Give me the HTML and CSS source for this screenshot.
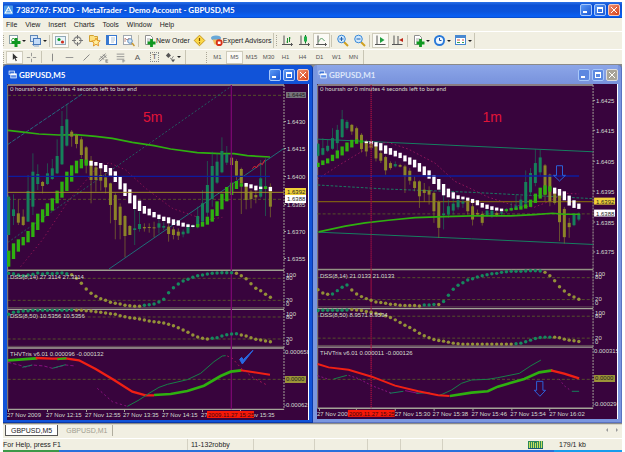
FILE: index.html
```html
<!DOCTYPE html>
<html lang="en">
<head>
<meta charset="utf-8">
<title>7382767: FXDD - MetaTrader - Demo Account - GBPUSD,M5</title>
<link rel="stylesheet" href="styles.css">
</head>
<body>
<svg class="defs" aria-hidden="true">
  <defs>
    <symbol id="i-plus" viewBox="0 0 13 13"><rect x="1.500" y="1.500" width="8" height="8" fill="#fff" stroke="#8aa0a8"/><path d="M3 7l2-3 2 2" stroke="#58a058" fill="none"/><path d="M8 4v9M3.500 8.500h9" stroke="#109820" stroke-width="3"/></symbol>
    <symbol id="i-profiles" viewBox="0 0 13 13"><rect x="1.500" y="1.500" width="7" height="6" fill="#d8e8fa" stroke="#6088b8"/><rect x="4.500" y="4.500" width="7" height="6" fill="#c4dcf8" stroke="#4878b8"/><path d="M3 10l2 2h5" fill="none" stroke="#88a8d0"/></symbol>
    <symbol id="i-market" viewBox="0 0 13 13"><rect x="1.500" y="2.500" width="10" height="8" fill="#e8f4fa" stroke="#90a8b8"/><circle cx="5" cy="5.500" r="1.600" fill="#10a030"/><circle cx="8.500" cy="8" r="1.600" fill="#d03020"/></symbol>
    <symbol id="i-target" viewBox="0 0 13 13"><circle cx="6.500" cy="6.500" r="3.500" fill="none" stroke="#888" stroke-width="1.300"/><path d="M6.500 1v4M6.500 8v4M1 6.500h4M8 6.500h4" stroke="#777"/></symbol>
    <symbol id="i-star" viewBox="0 0 13 13"><path d="M1.500 1.500h4l1 1h3v5h-8z" fill="#fce080" stroke="#d0a030"/><path d="M8 4l1.200 2.500 3 .3-2.200 2 .6 3-2.600-1.500L5.400 12l.6-3-2.200-2 3-.3z" fill="#fff0a0" stroke="#e09018" stroke-width=".9"/></symbol>
    <symbol id="i-nav" viewBox="0 0 13 13"><rect x="1.500" y="1.500" width="10" height="9" fill="#fff" stroke="#3878d0"/><path d="M3 2v8" stroke="#3878d0" stroke-width="2"/><path d="M6 4h4M6 6h4M6 8h3" stroke="#b0c4d8"/></symbol>
    <symbol id="i-data" viewBox="0 0 13 13"><rect x="1.500" y="1.500" width="8" height="9" fill="#fff" stroke="#a0a8b0"/><path d="M3 8V4l2 2 2-2v4" fill="none" stroke="#c09088"/><circle cx="8" cy="7" r="2.300" fill="#d4e8fa" stroke="#6090c0"/><path d="M10 9l2.500 3" stroke="#c89830" stroke-width="1.500"/></symbol>
    <symbol id="i-order" viewBox="0 0 13 13"><path d="M2.500 1.500h5l2 2v7h-7z" fill="#fff" stroke="#909090"/><path d="M4 5h4M4 7h3" stroke="#aaa"/><path d="M8.500 5v8M4.500 9h8" stroke="#109820" stroke-width="2.800"/></symbol>
    <symbol id="i-diamond" viewBox="0 0 13 13"><path d="M6.500 1.200l5.300 5.300-5.300 5.300-5.300-5.300z" fill="#fcd848" stroke="#c89818"/><path d="M6.500 4v3M6.500 8.200v1.200" stroke="#805000" stroke-width="1.200"/></symbol>
    <symbol id="i-expert" viewBox="0 0 13 13"><ellipse cx="6" cy="4" rx="5" ry="2.500" fill="#68a8d8"/><path d="M2.500 5.500h7l-1 5h-4z" fill="#f0c060"/><circle cx="9.200" cy="8.700" r="3.400" fill="#d83018"/><rect x="7.800" y="7.500" width="2.800" height="2.500" fill="#fff"/></symbol>
    <symbol id="i-bars" viewBox="0 0 13 13"><path d="M3 1.500v9.500M1 10.500h10.500M10 9l1.500 1.500L10 12" stroke="#555" fill="none"/><path d="M6.500 4v5M8.500 3v5M5.500 8h1M8.500 4h1" stroke="#209030"/></symbol>
    <symbol id="i-candles" viewBox="0 0 13 13"><path d="M3 1.500v9.500M1 10.500h10.500M10 9l1.500 1.500L10 12" stroke="#555" fill="none"/><path d="M7.500 1v8.500" stroke="#107828"/><rect x="6" y="2.500" width="3" height="5" fill="#20b048"/></symbol>
    <symbol id="i-line" viewBox="0 0 13 13"><path d="M3 1.500v9.500M1 10.500h10.500M10 9l1.500 1.500L10 12" stroke="#555" fill="none"/><path d="M3.500 8c2-5 4-4 6-1" stroke="#58a068" fill="none"/></symbol>
    <symbol id="i-zoomin" viewBox="0 0 13 13"><path d="M8 8l4 4" stroke="#d0a020" stroke-width="2"/><circle cx="5.500" cy="5" r="3.800" fill="#d0e8fc" stroke="#3888d8"/><path d="M3.500 5h4M5.500 3v4" stroke="#2060b0"/></symbol>
    <symbol id="i-zoomout" viewBox="0 0 13 13"><path d="M8 8l4 4" stroke="#d0a020" stroke-width="2"/><circle cx="5.500" cy="5" r="3.800" fill="#d0e8fc" stroke="#3888d8"/><path d="M3.500 5h4" stroke="#2060b0"/></symbol>
    <symbol id="i-scroll" viewBox="0 0 13 13"><path d="M3 1.500v9.500M1 10.500h10.500" stroke="#555"/><path d="M6 3l4.500 3L6 9z" fill="#20a040"/></symbol>
    <symbol id="i-shift" viewBox="0 0 13 13"><path d="M3 1.500v9.500M1 10.500h10.500M7 2v8" stroke="#555"/><path d="M12 4v4L8 6z" fill="#c02818"/></symbol>
    <symbol id="i-clock" viewBox="0 0 13 13"><circle cx="6.500" cy="6.500" r="5.500" fill="#2878d8"/><circle cx="6.500" cy="6.500" r="3.600" fill="#f0f8ff"/><path d="M6.500 4v2.500h2" stroke="#2050a0" fill="none"/></symbol>
    <symbol id="i-template" viewBox="0 0 13 13"><rect x="1.500" y="1.500" width="10" height="9" fill="#fff" stroke="#4888d0"/><path d="M1 3h11" stroke="#4888d0" stroke-width="2"/><path d="M3 6h3M8 6h2" stroke="#d05040"/><path d="M3 8.500h3M8 8.500h2" stroke="#38a050"/></symbol>
    <symbol id="i-cursor" viewBox="0 0 13 13"><path d="M4.500 1.500v8l2-2 1.500 3.500 1.300-.6-1.500-3.300h2.600z" fill="#333"/></symbol>
    <symbol id="i-cross" viewBox="0 0 13 13"><path d="M6.500 1v4M6.500 8v4M1 6.500h4M8 6.500h4" stroke="#888"/></symbol>
    <symbol id="i-vline" viewBox="0 0 13 13"><path d="M6.500 2v9" stroke="#777"/></symbol>
    <symbol id="i-hline" viewBox="0 0 13 13"><path d="M2 6.500h9" stroke="#888"/></symbol>
    <symbol id="i-trend" viewBox="0 0 13 13"><path d="M3 10l7-7" stroke="#777"/></symbol>
    <symbol id="i-channel" viewBox="0 0 13 13"><path d="M1 9l8-7M2 11l8-7M3 5l4 4M6 3l4 4M9 9.500h3M9 12h3M9.500 9v3" stroke="#777" fill="none"/></symbol>
    <symbol id="i-fibo" viewBox="0 0 13 13"><path d="M2 2.500h9M2 5.500h9M2 8.500h9M9.500 9v3.500M9 10.500h3" stroke="#888"/></symbol>
    <symbol id="i-arrows" viewBox="0 0 13 13"><path d="M1 4l3-3 3 3-3 3z" fill="#555"/><path d="M6 7l1.500 1.500L10 5" stroke="#777" fill="none"/><path d="M7 9h5l-2.500 3z" fill="#555"/></symbol>
    <symbol id="i-child" viewBox="0 0 13 13"><rect x="1.500" y="1.500" width="8" height="5" fill="#3d74d8" stroke="#fff"/><rect x="4" y="5.500" width="8" height="6" fill="#5e8ee8" stroke="#fff"/><path d="M4 6.500h8" stroke="#fff" stroke-width="2"/></symbol>
  </defs>
</svg>
<div class="app">
  <header class="titlebar">
    <svg class="logo" viewBox="0 0 12 12" aria-hidden="true"><rect width="12" height="12" rx="1" fill="#4c9be8"/><path d="M6 2l4.500 8h-9z" fill="none" stroke="#fff" stroke-width="1.400"/><path d="M4 7h4" stroke="#fff"/></svg>
    <h1>7382767: FXDD - MetaTrader - Demo Account - GBPUSD,M5</h1>
    <div class="controls"><button class="min" aria-label="Minimize"></button><button class="max" aria-label="Maximize"></button><button class="close" aria-label="Close"></button></div>
  </header>
  <nav class="menu">
    <button>File</button><button>View</button><button>Insert</button><button>Charts</button><button>Tools</button><button>Window</button><button>Help</button>
  </nav>
  <div class="toolbar">
    <div class="band">
      <i class="grip"></i>
      <button class="tool drop" aria-label="New chart"><svg><use href="#i-plus"/></svg></button>
      <button class="tool drop" aria-label="Profiles"><svg><use href="#i-profiles"/></svg></button>
      <i class="sep"></i>
      <button class="tool on" aria-label="Market watch"><svg><use href="#i-market"/></svg></button>
      <button class="tool" aria-label="Crosshair window"><svg><use href="#i-target"/></svg></button>
      <button class="tool" aria-label="Favorites"><svg><use href="#i-star"/></svg></button>
      <button class="tool" aria-label="Navigator"><svg><use href="#i-nav"/></svg></button>
      <button class="tool" aria-label="Data window"><svg><use href="#i-data"/></svg></button>
      <i class="sep"></i>
      <button class="tool wide"><svg><use href="#i-order"/></svg>New Order</button>
      <button class="tool" aria-label="Alerts"><svg><use href="#i-diamond"/></svg></button>
      <button class="tool wide"><svg><use href="#i-expert"/></svg>Expert Advisors</button>
    </div>
    <div class="band">
      <i class="grip"></i>
      <button class="tool" aria-label="Bar chart"><svg><use href="#i-bars"/></svg></button>
      <button class="tool" aria-label="Candlesticks"><svg><use href="#i-candles"/></svg></button>
      <button class="tool on" aria-label="Line chart"><svg><use href="#i-line"/></svg></button>
      <i class="sep"></i>
      <button class="tool" aria-label="Zoom in"><svg><use href="#i-zoomin"/></svg></button>
      <button class="tool" aria-label="Zoom out"><svg><use href="#i-zoomout"/></svg></button>
      <i class="sep"></i>
      <button class="tool on" aria-label="Auto scroll"><svg><use href="#i-scroll"/></svg></button>
      <button class="tool" aria-label="Chart shift"><svg><use href="#i-shift"/></svg></button>
      <i class="sep"></i>
      <button class="tool drop" aria-label="Indicators"><svg><use href="#i-order"/></svg></button>
      <button class="tool drop" aria-label="Periods"><svg><use href="#i-clock"/></svg></button>
      <button class="tool drop" aria-label="Templates"><svg><use href="#i-template"/></svg></button>
    </div>
  </div>
  <div class="toolbar small">
    <div class="band lines">
      <i class="grip"></i>
      <button class="tool on" aria-label="Cursor"><svg><use href="#i-cursor"/></svg></button>
      <button class="tool" aria-label="Crosshair"><svg><use href="#i-cross"/></svg></button>
      <i class="sep"></i>
      <button class="tool" aria-label="Vertical line"><svg><use href="#i-vline"/></svg></button>
      <button class="tool" aria-label="Horizontal line"><svg><use href="#i-hline"/></svg></button>
      <button class="tool" aria-label="Trendline"><svg><use href="#i-trend"/></svg></button>
      <button class="tool" aria-label="Channel"><svg><use href="#i-channel"/></svg></button>
      <button class="tool" aria-label="Fibonacci"><svg><use href="#i-fibo"/></svg></button>
      <button class="tool glyph">A</button>
      <button class="tool glyph"><span>T</span></button>
      <button class="tool drop" aria-label="Arrows"><svg><use href="#i-arrows"/></svg></button>
    </div>
    <div class="band periods">
      <i class="grip"></i>
      <button class="tool">M1</button><button class="tool on">M5</button><button class="tool">M15</button><button class="tool">M30</button><button class="tool">H1</button><button class="tool">H4</button><button class="tool">D1</button><button class="tool">W1</button><button class="tool">MN</button>
    </div>
  </div>
  <main class="desk">
    <section class="win">
      <header><svg class="child" aria-hidden="true"><use href="#i-child"/></svg><h2>GBPUSD,M5</h2>
        <div class="controls"><button class="min" aria-label="Minimize"></button><button class="max" aria-label="Maximize"></button><button class="close" aria-label="Close"></button></div></header>
      <svg class="chart" id="m5" viewBox="8 84 301 336" role="img" aria-label="GBPUSD M5 chart"></svg>
    </section>
    <section class="win idle">
      <header><svg class="child" aria-hidden="true"><use href="#i-child"/></svg><h2>GBPUSD,M1</h2>
        <div class="controls"><button class="min" aria-label="Minimize"></button><button class="max" aria-label="Maximize"></button><button class="close" aria-label="Close"></button></div></header>
      <svg class="chart" id="m1" viewBox="317 84 301 336" role="img" aria-label="GBPUSD M1 chart"></svg>
    </section>
  </main>
  <div class="tabs"><button class="active">GBPUSD,M5</button><button>GBPUSD,M1</button><span class="arrows"><i></i><i></i></span></div>
  <footer class="status">
    <span class="help">For Help, press F1</span><span class="user">11-132robby</span><span></span><span></span><span></span><span></span><span></span>
    <span class="net"><svg viewBox="0 0 15 8" aria-hidden="true"><rect width="15" height="8" fill="#2c8858"/><path d="M1.500 1v6M3.500 1v6M5.500 1v6M7.500 2v5M9.500 1v6M11.500 0v7M13.500 0v7" stroke="#c8e060"/><path d="M0 7.500h15" stroke="#185878"/></svg>179/1 kb</span>
  </footer>
  <div class="taskbar"></div>
</div>
<script src="charts.js"></script>
</body>
</html>
```
FILE: styles.css
```css
* { box-sizing: border-box; }
body { margin: 0; background: #fff; font-family: "Liberation Sans", Arial, sans-serif; font-size: 7px; color: #222; }
button { font: inherit; color: inherit; margin: 0; padding: 0; border: 0; background: none; }
h1, h2 { margin: 0; color: #fff; font-family: Lato, sans-serif; font-weight: 700; white-space: nowrap; }
.defs { position: absolute; width: 0; height: 0; }
.app { display: flex; flex-direction: column; padding: 2px 3px 0; min-height: 100vh; background: #fff; }

.titlebar { display: flex; align-items: center; height: 16px; padding: 0 2px 0 1px; background: linear-gradient(#2b72e8, #0c50d4 20%, #0c54dc 60%, #0a60f4 90%, #0a48c0); }
.logo { width: 9px; height: 10px; margin-right: 3px; }
h1 { font-size: 8px; line-height: 12px; }
.controls { display: flex; gap: 2px; margin-left: auto; }
.controls button { position: relative; width: 12px; height: 12px; border: 1px solid #a8c8fa; border-radius: 2px; background: linear-gradient(135deg, #5a98f4, #1c58d4); }
.controls .close { background: linear-gradient(135deg, #f09070, #d84018); border-color: #f8c8b8; }
.controls button::after { content: ""; position: absolute; box-sizing: border-box; }
.controls .min::after { left: 2px; bottom: 2px; width: 4px; height: 2px; background: #fff; }
.controls .max::after { inset: 2px; border: 1px solid #fff; border-top-width: 2px; }
.controls .close::after { inset: 2px; background: linear-gradient(45deg, transparent 42%, #fff 42% 58%, transparent 58%), linear-gradient(-45deg, transparent 42%, #fff 42% 58%, transparent 58%); }

.menu { display: flex; gap: 8px; height: 13px; align-items: center; padding: 0 3px; background: #f1efe2; }
.toolbar { display: flex; gap: 2px; height: 18px; padding: 1px 0; background: #f1efe2; border-top: 1px solid #fff; }
.small { height: 15px; padding: 0; }
.band { display: flex; align-items: center; padding-right: 1px; border-right: 1px solid #c8c5b4; }
.grip { width: 2px; height: 11px; margin-right: 1px; border-left: 1px dotted #aaa696; }
.sep { width: 1px; height: 12px; margin: 0 2px 0 1px; background: #c8c5b4; }
.tool { position: relative; display: flex; align-items: center; justify-content: center; flex: none; width: 17px; height: 15px; }
.small .tool { height: 13px; }
.tool svg { width: 13px; height: 13px; flex: none; }
.small .tool svg { width: 11px; height: 11px; }
.on { background: #fbfaf5; border: 1px solid #cfccbc; }
.drop { width: 21px; justify-content: flex-start; padding-left: 2px; }
.drop::after { content: ""; border: 2px solid transparent; border-top-color: #222; border-bottom: 0; margin-left: 1px; }
.wide { width: auto; padding: 0 1px 0 2px; }
.glyph { font-size: 8px; color: #555; }
.glyph span { border: 1px dotted #888; line-height: 8px; padding: 0 1px; }
.periods { margin-left: 18px; font-size: 6px; color: #555; }

.desk { display: grid; grid-template-columns: 310fr 309fr; background: #8a8a88; padding: 1px 0; }
.win { background: #1153d8; padding: 0 3px 2px 4px; border-radius: 4px 4px 0 0; border: 1px solid #0a38a8; border-width: 0 1px 1px 0; }
.win header { display: flex; align-items: center; height: 19px; padding-left: 1px; }
.win h2 { font-size: 8px; line-height: 12px; }
.child { width: 9px; height: 9px; margin-right: 2px; }
.win .controls { margin-right: 0; }
.idle { background: #7a96df; border-color: #5a72c0; }
.idle header { background: linear-gradient(#8ca6e8, #7892dc); }
.idle h2 { color: #dde6fa; }
.idle .close { background: #a8a498; border-color: #ddd; }
.idle .max, .idle .min { background: #5c88e0; }
.chart { display: block; width: 100%; height: auto; background: #38043d; border: 0 solid #b8b8ac; border-right: 1px solid #fff; }
.chart text { font-family: "Liberation Sans", Arial, sans-serif; font-size: 6px; fill: #d4dccf; }
.chart .head { font-family: Lato, sans-serif; }
.chart .note { font-size: 14px; fill: #e01438; }
.chart .dark { fill: #222; }
.chart .stamp { fill: #400810; }

.tabs { display: flex; align-items: flex-start; gap: 3px; height: 14px; padding: 0 4px 2px 2px; background: #f1efe2; border-top: 1px solid #d8d5c8; }
.tabs button { height: 11px; padding: 0 5px; color: #a09d90; border-right: 1px solid #b0ad9e; }
.tabs .active { background: #fff; color: #222; border: 1px solid #555; border-top: 0; }
.arrows { display: flex; gap: 8px; margin: 3px 0 0 auto; }
.arrows i { border: 2px solid transparent; border-right-color: #999; border-left: 0; }
.arrows i + i { border: 2px solid transparent; border-left-color: #999; border-right: 0; }
.status { display: grid; grid-template-columns: 184fr 66fr 61fr 53fr 33fr 42fr 43fr 137fr; height: 12px; align-items: stretch; background: #f1efe2; border-top: 1px solid #fff; line-height: 11px; }
.status span { border-left: 1px solid #d4d1c2; padding-left: 3px; white-space: nowrap; }
.status .help { border: 0; padding-left: 0; }
.status .net { display: flex; align-items: center; gap: 16px; border: 0; }
.net svg { width: 15px; height: 8px; margin-left: 40px; }
.taskbar { flex: 1; min-height: 2px; background: linear-gradient(90deg, #3c9848 0 9%, #2870dc 9% 89%, #189cec 89%); }
```
FILE: charts.js
```js
const NS = "http://www.w3.org/2000/svg";
const TEAL = "#16805a", OLIVE = "#8c8428", GREEN = "#2fb010", WHITE = "#ffffff";
const RED = "#f02014", PURPLE = "#8a1080", GRID = "#55502a";
const STEP = 14.54;

function add(parent, tag, attrs, text) {
  const el = document.createElementNS(NS, tag);
  for (const k in attrs) el.setAttribute(k, attrs[k]);
  if (text !== undefined) el.textContent = text;
  parent.appendChild(el);
  return el;
}
function line(g, points, stroke, width, dash) {
  add(g, "polyline", { points, fill: "none", stroke, "stroke-width": width, "stroke-dasharray": dash || "none" });
}
function candles(g, x0, rows) {
  rows.forEach(([c, wt, wb, bt, bb], i) => {
    const x = x0 + i * STEP, color = c === "T" ? TEAL : OLIVE;
    add(g, "rect", { x: x - 1.5, y: wt, width: 3, height: wb - wt, fill: color, opacity: .6 });
    add(g, "rect", { x: x - 4.5, y: bt, width: 9, height: Math.max(3, bb - bt), fill: color });
  });
}
function ribbon(g, x0, rows) {
  rows.forEach(([c, t, b], i) => add(g, "rect", { x: x0 + i * STEP - 5, y: t, width: 10, height: b - t, fill: c === "W" ? WHITE : GREEN }));
}
function dots(g, x0, ys, isTeal) {
  ys.forEach((y, i) => add(g, "circle", { cx: x0 + i * STEP, cy: y + 555, r: 5.2, fill: isTeal(i) ? "#16885e" : "#949038" }));
}
/* Marks are plotted on a grid three times finer than the page pixel. */
function frame(svg, left, axis, zero) {
  const g = add(svg, "g", { transform: "translate(0 80) scale(.33333)" });
  const right = axis;
  [595, 661, 711, 777, zero].forEach(y => line(g, `${left},${y} ${right},${y}`, GRID, 3, "9 6"));
  [15, 571, 688, 804, 988].forEach(y => line(g, `${left},${y} ${right},${y}`, "#a4a498", 4));
  [569, 683, 799].forEach(y => line(g, `${left},${y} ${right},${y}`, "#747060", 2));
  line(g, `${left},15 ${left},988`, "#8c8c80", 3);
  line(g, `${axis},15 ${axis},988`, "#a4a498", 3, "6 3");
  return g;
}
function label(svg, x, y, text, cls) { add(svg, "text", { x, y, class: cls || "" }, text); }
function box(svg, x, y, w, h, fill) { add(svg, "rect", { x, y, width: w, height: h, fill }); }
function axisLabels(svg, x, rows) { rows.forEach(([y, t]) => { box(svg, x - 3, y - 3, 2, 1, "#a4a498"); label(svg, x, y, t); }); }
function paneScales(svg, x) { [[277, "100"], [280, "80"], [302, "20"], [306, "0"], [316, "100"], [319, "80"], [341, "20"], [345, "0"]].forEach(([y, t]) => label(svg, x, y, t)); }

/* ---- five minute chart ---- */
{
  const svg = document.getElementById("m5"), x0 = 29;
  const g = frame(svg, 26, 855, 898);
  line(g, "27,46 855,46", GRID, 3, "9 6");
  line(g, "27,358 855,358", GRID, 3, "9 6");
  line(g, "27,193 250,42", "#246a80", 3, "12 4");
  line(g, "27,487 695,20", "#1f6c66", 2.5, "6 6");
  line(g, "330,567 855,205", "#1f6e78", 3);
  line(g, "65,560 130,480 210,360 290,268 330,248 380,270 440,325 520,385 620,420 670,412", "#a01858", 2.5, "4 8");
  line(g, "27,151 60,155 120,162 180,165 230,164 290,169 340,175 400,187 465,197 515,207 595,218 665,221 705,221 745,227 813,231", GREEN, 5);
  candles(g, x0, [["T",345,465,350,465],["T",343,435,388,408],["O",358,435,400,428],["O",388,438,410,435],["T",285,425,333,425],["T",220,405,275,380],["T",253,330,282,312],["O",303,340,306,318],["T",250,315,280,312],["T",237,300,265,297],["T",178,282,228,280],["T",93,255,138,253],["T",72,200,118,197],["O",150,200,155,170],["O",162,205,165,192],["O",170,235,178,225],["O",198,280,202,250],["O",228,370,240,300],["O",245,335,262,300],["O",265,332,285,302],["O",278,340,292,322],["O",308,430,310,375],["O",340,478,345,420],["O",370,478,380,435],["O",405,532,408,468],["O",435,465,438,465],["T",388,495,445,450],["T",395,455,432,447],["O",430,455,441,445],["O",430,458,441,444],["O",425,472,442,444],["T",405,460,430,443],["T",425,450,438,443],["O",430,485,440,462],["O",440,478,448,465],["O",445,480,455,467],["T",448,472,455,463],["T",430,462,435,460],["T",432,445,436,440],["T",380,445,408,438],["T",330,430,370,425],["T",243,410,315,398],["T",215,380,258,357],["T",220,312,245,308],["T",172,280,213,277],["T",198,255,222,248],["O",230,258,233,255],["O",238,300,243,287],["O",263,402,267,310],["O",308,388,312,360],["O",330,385,335,357],["O",330,370,345,352],["T",240,355,295,350],["T",235,408,318,325],["O",310,412,320,380]]);
  ribbon(g, x0, [["G",512,560],["G",490,537],["G",478,515],["G",471,496],["G",453,487],["G",427,471],["G",401,450],["G",388,427],["G",370,408],["G",355,392],["G",332,370],["G",305,353],["G",275,333],["G",256,305],["G",242,280],["G",237,265],["G",239,257],["W",243,257],["W",246,257],["W",249,265],["W",255,276],["W",264,287],["W",274,306],["W",291,328],["W",310,348],["W",328,370],["W",346,387],["W",362,393],["W",378,401],["W",386,406],["W",396,412],["W",404,417],["W",410,423],["W",412,430],["W",418,435],["W",421,437],["W",428,440],["W",433,441],["W",436,441],["G",432,442],["G",426,440],["G",410,434],["G",388,425],["G",364,408],["G",341,388],["G",321,364],["G",308,345],["G",303,327],["G",310,320],["W",309,320],["W",313,325],["W",317,331],["W",320,327],["G",320,327],["W",321,333]]);
  line(g, "27,289 813,289", "#0c1ca0", 4);
  line(g, "27,337 855,337", "#a08c28", 3);
  line(g, "760,266 767,258 772,264 778,254 785,250 790,254 797,240", "#e02030", 3);
  line(g, "697,15 697,988", "#78086e", 4);
  dots(g, x0, [25,26,30,32,30,28,24,27,25,26,25,24,26,29,40,55,72,85,94,101,106,112,115,117,121,122,124,124,121,119,117,111,103,83,68,57,48,43,37,32,30,27,25,24,23,23,23,25,32,41,56,70,77,88,97], i => i < 13 || (i > 27 && i < 47));
  dots(g, x0, [148,142,140,138,137,136,136,136,136,136,136,136,136,135,136,136,137,138,140,142,144,146,148,152,155,158,160,162,165,168,170,172,174,178,182,188,195,202,210,216,220,222,220,218,213,209,207,206,210,213,218,223,225,228,230], i => i < 14 || (i > 41 && i < 48));
  const t = add(g, "g", { transform: "translate(0 555)" });
  line(t, "27,292 60,300 80,306 100,300 135,303 160,310 200,300 230,303", PURPLE, 3, "10 6");
  line(t, "70,307 100,300", TEAL, 3); line(t, "160,310 200,299", TEAL, 3);
  line(t, "27,286 60,284 100,281 115,280", GREEN, 8);
  line(t, "110,279 160,281 200,280 240,286 290,312 345,345 400,380 440,391 465,391", RED, 7);
  line(t, "175,283 202,280", GREEN, 6);
  line(t, "465,390 515,387 565,378 615,362 665,333 695,320 727,316", GREEN, 8);
  line(t, "725,316 765,322 813,329", RED, 6);
  line(t, "295,370 340,410 385,424", PURPLE, 3, "6 8");
  line(t, "385,424 420,405 450,385 480,367 505,358 565,344 605,325 645,290 670,273 680,272", "#188048", 3);
  line(t, "685,273 700,280 727,310 765,340 800,358", "#b01858", 3, "5 9");
  add(t, "path", { d: "M722 283l8 14 32-41-29 28-5-7z", fill: "#2868e0", stroke: "#2868e0", "stroke-width": 3 });
  label(svg, 11, 91, "0 hourssh or 1 minutes 4 seconds left to bar end", "head");
  label(svg, 144, 122, "5m", "note");
  box(svg, 287, 92, 20, 6, "#77737b"); label(svg, 288, 97, "1.6445", "dark");
  axisLabels(svg, 288, [[124, "1.6430"], [151, "1.6415"], [179, "1.6400"], [207, "1.6385"], [234, "1.6370"], [261, "1.6355"]]);
  box(svg, 286, 188, 21, 7, "#f0d038"); label(svg, 288, 194, "1.6392", "dark");
  box(svg, 286, 195, 21, 8, "#fff"); label(svg, 288, 201, "1.6388", "dark");
  paneScales(svg, 287);
  label(svg, 11, 279, "DSS(8,14) 27.3114 27.3114");
  label(svg, 11, 318, "DSS(8,50) 10.5356 10.5356");
  label(svg, 11, 356, "THVTris v6.01 0.000096 -0.000132");
  label(svg, 286, 354, "0.000658"); label(svg, 285, 407, "-0.00062");
  box(svg, 286, 376, 21, 7, "#9c9438"); label(svg, 287, 381, "0.0000", "dark");
  [9, 48, 87, 125, 164, 203, 241].forEach(x => box(svg, x, 410, 1, 2, "#a4a498"));
  [[8, "27 Nov 2009"], [47, "27 Nov 12:15"], [86, "27 Nov 12:55"], [124, "27 Nov 13:35"], [163, "27 Nov 14:15"], [202, "27 Nov 14:55"], [240, "27 Nov 15:35"]].forEach(([x, s]) => label(svg, x, 417, s));
  box(svg, 208, 411, 47, 7, "#f81808"); label(svg, 209, 417, "2009.11.27 15:25", "stamp");
}

/* ---- one minute chart ---- */
{
  const svg = document.getElementById("m1"), x0 = 954;
  const g = frame(svg, 953, 1782, 901);
  line(g, "953,403 1782,403", GRID, 3, "9 6");
  line(g, "953,366 1782,366", "#7c5c14", 4);
  line(g, "953,178 1782,216", "#168060", 3);
  line(g, "953,316 1156,328 1416,338 1780,357", "#1a7860", 3, "8 5");
  line(g, "953,458 1416,478 1782,495", "#168060", 3);
  line(g, "953,298 1016,257 1086,215 1121,192 1166,188 1226,208 1306,250 1366,305 1416,328 1465,352 1535,375 1605,383 1650,365 1695,341 1740,343", "#a01860", 2.5, "5 7");
  candles(g, x0, [["T",190,230,192,228],["T",175,227,205,225],["T",180,217,198,213],["T",145,210,175,207],["T",135,218,150,190],["T",90,175,118,172],["T",120,150,126,145],["O",132,165,135,155],["O",140,190,145,182],["O",160,218,165,208],["O",180,230,185,215],["O",180,208,190,205],["O",190,245,195,236],["O",205,250,220,243],["O",228,285,232,272],["O",245,270,250,265],["T",245,263,253,260],["O",252,263,256,261],["O",255,340,260,290],["O",265,315,273,303],["O",290,335,305,325],["O",302,385,305,350],["O",310,367,330,340],["O",320,375,332,345],["O",335,430,340,395],["O",362,475,367,445],["T",345,450,402,407],["T",360,415,380,405],["T",352,405,372,393],["T",350,390,362,383],["T",355,385,366,372],["O",358,405,362,395],["O",370,438,380,420],["O",390,410,400,405],["O",395,438,403,430],["T",385,412,393,408],["T",385,415,393,410],["O",395,412,400,407],["T",395,407,398,402],["T",385,400,388,394],["T",368,395,385,390],["T",345,392,378,390],["T",348,390,360,385],["T",272,385,307,372],["T",265,345,280,338],["T",208,320,250,310],["T",210,290,233,278],["O",253,365,257,345],["O",282,380,285,365],["O",325,375,332,370],["O",335,485,345,428],["O",382,492,388,473],["O",415,475,430,443],["T",400,440,403,437],["T",398,425,403,420]]);
  line(g, "956,457 1036,440 1096,430 1166,422 1246,414 1336,411 1416,409 1535,409 1605,405 1660,401 1695,404 1743,404", GREEN, 5);
  ribbon(g, x0, [["G",249,262],["G",242,256],["G",236,251],["G",225,244],["G",212,236],["G",200,227],["G",188,215],["G",180,203],["G",178,192],["G",181,190],["W",185,190],["W",184,192],["W",187,200],["W",190,212],["W",197,222],["W",205,225],["W",213,230],["W",219,235],["W",227,245],["W",233,255],["W",240,263],["W",250,276],["W",260,287],["W",272,297],["W",286,313],["W",298,330],["W",313,347],["W",327,353],["W",338,357],["W",347,358],["W",351,359],["W",354,363],["W",358,370],["W",362,377],["W",370,384],["W",375,388],["W",380,391],["W",384,393],["W",387,395],["G",389,395],["G",386,393],["G",384,391],["G",380,390],["G",374,387],["G",360,382],["G",342,370],["G",324,357],["G",317,345],["G",320,336],["W",324,342],["W",328,348],["W",335,362],["W",348,378],["W",362,385],["W",372,388]]);
  line(g, "953,289 1740,289", "#0c1ca0", 4);
  line(g, "1114,15 1114,988", "#a01040", 4, "4 2");
  add(g, "path", { d: "M1672 258h18v29h9l-18 17-18-17h9z", fill: "none", stroke: "#2c60d8", "stroke-width": 3 });
  dots(g, x0, [76,86,90,89,79,69,62,77,89,97,103,108,113,115,117,120,121,123,124,124,124,125,122,122,121,121,112,93,75,63,55,47,43,38,34,31,28,27,24,22,21,21,21,20,19,19,20,24,34,49,67,80,91,98,105], i => (i > 2 && i < 7) || (i > 21 && i < 47 && i !== 25));
  dots(g, x0, [139,138,138,138,138,138,137,136,137,139,142,144,147,150,155,160,167,175,183,190,198,207,215,221,226,229,231,234,237,239,240,240,240,240,240,240,240,240,240,240,240,239,237,233,228,223,220,219,219,219,221,225,228,230,232], i => i < 7 || (i > 40 && i < 49));
  const t = add(g, "g", { transform: "translate(0 555)" });
  line(t, "953,335 986,346", PURPLE, 3, "6 6"); line(t, "1001,345 1041,334", "#188048", 3);
  line(t, "1046,334 1076,344 1116,365 1176,388", PURPLE, 3, "6 6"); line(t, "1170,388 1211,382", TEAL, 3);
  line(t, "1216,380 1256,388", PURPLE, 3); line(t, "1250,388 1290,386", TEAL, 3);
  line(t, "1316,395 1330,390 1356,378 1386,358 1416,348 1465,346 1495,341 1560,328 1595,305 1625,288", "#188048", 3);
  line(t, "953,300 986,310 1046,317 1116,338 1186,365 1256,382 1316,394 1350,396", RED, 6);
  line(t, "1351,396 1416,386 1465,382 1495,368 1575,345 1620,325 1660,319", GREEN, 8);
  line(t, "1655,319 1695,329 1740,343", RED, 7);
  line(t, "1680,345 1695,365 1715,380", PURPLE, 3, "5 8"); line(t, "1718,382 1740,382", TEAL, 3);
  add(t, "path", { d: "M1612 352h19v27h8l-17 18-17-18h7z", fill: "none", stroke: "#2c60d8", "stroke-width": 3 });
  label(svg, 320, 91, "0 hourssh or 0 minutes 4 seconds left to bar end", "head");
  label(svg, 483, 122, "1m", "note");
  axisLabels(svg, 597, [[103, "1.6425"], [133, "1.6415"], [164, "1.6405"], [194, "1.6395"], [225, "1.6385"], [255, "1.6375"]]);
  box(svg, 595, 198, 21, 7, "#f0d038"); label(svg, 597, 204, "1.6392", "dark");
  box(svg, 595, 210, 21, 7, "#fff"); label(svg, 597, 216, "1.6388", "dark");
  paneScales(svg, 596);
  label(svg, 320, 279, "DSS(8,14) 21.0133 21.0133");
  label(svg, 320, 318, "DSS(8,50) 8.9571 8.9534");
  label(svg, 320, 356, "THVTris v6.01 0.000011 -0.000126");
  label(svg, 595, 354, "0.000315"); label(svg, 594, 407, "-0.00029");
  box(svg, 595, 376, 21, 7, "#9c9438"); label(svg, 596, 381, "0.0000", "dark");
  [319, 356, 395, 434, 473, 512, 550].forEach(x => box(svg, x, 410, 1, 2, "#a4a498"));
  [[317, "27 Nov 2009"], [395, "27 Nov 15:30"], [433, "27 Nov 15:38"], [472, "27 Nov 15:46"], [511, "27 Nov 15:54"], [550, "27 Nov 16:02"]].forEach(([x, s]) => label(svg, x, 417, s));
  box(svg, 348, 411, 47, 7, "#f81808"); label(svg, 349, 417, "2009.11.27 15:25", "stamp");
}
```
